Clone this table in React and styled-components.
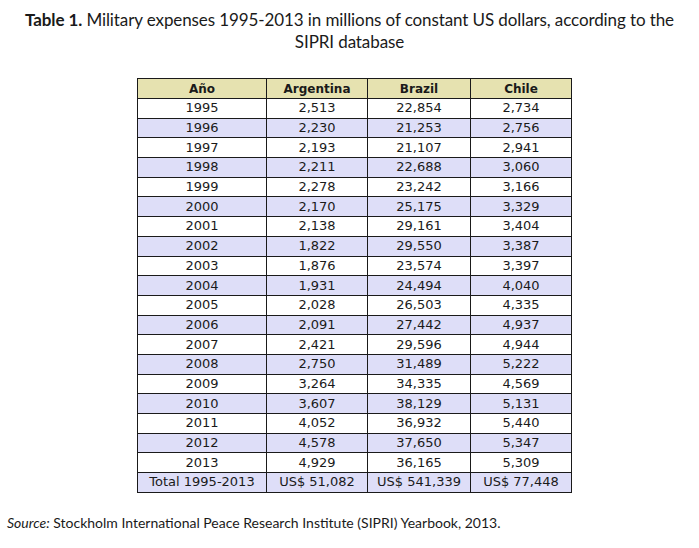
import React from "react";
import styled, { createGlobalStyle } from "styled-components";

const rows = [
  ["1995", "2,513", "22,854", "2,734"],
  ["1996", "2,230", "21,253", "2,756"],
  ["1997", "2,193", "21,107", "2,941"],
  ["1998", "2,211", "22,688", "3,060"],
  ["1999", "2,278", "23,242", "3,166"],
  ["2000", "2,170", "25,175", "3,329"],
  ["2001", "2,138", "29,161", "3,404"],
  ["2002", "1,822", "29,550", "3,387"],
  ["2003", "1,876", "23,574", "3,397"],
  ["2004", "1,931", "24,494", "4,040"],
  ["2005", "2,028", "26,503", "4,335"],
  ["2006", "2,091", "27,442", "4,937"],
  ["2007", "2,421", "29,596", "4,944"],
  ["2008", "2,750", "31,489", "5,222"],
  ["2009", "3,264", "34,335", "4,569"],
  ["2010", "3,607", "38,129", "5,131"],
  ["2011", "4,052", "36,932", "5,440"],
  ["2012", "4,578", "37,650", "5,347"],
  ["2013", "4,929", "36,165", "5,309"],
];

const GlobalStyle = createGlobalStyle`
  body {
    margin: 0;
    background: #ffffff;
    font-family: "Lato", "Open Sans", sans-serif;
    color: #1a1a1a;
  }
`;

const Page = styled.main`
  width: 699px;
  height: 548px;
  padding-top: 9px;
  box-sizing: border-box;
`;

const Caption = styled.h1`
  margin: 0 auto;
  width: 652px;
  text-align: center;
  font-size: 17px;
  letter-spacing: -0.1px;
  font-weight: 400;
  line-height: 22px;
  color: #1a1a1a;

  b {
    font-weight: 700;
  }
`;

const Table = styled.table`
  margin: 25px 0 0 137px;
  border-collapse: collapse;
  font-family: "DejaVu Sans", sans-serif;
  font-size: 13px;
  color: #1a1a1a;
`;

const Head = styled.th`
  background: #e6e2b0;
  border: 1px solid #1a1a1a;
  height: 19px;
  padding: 0;
  font-weight: 700;
  font-size: 12px;
  width: ${(p) => p.$w}px;
`;

const Row = styled.tr`
  background: ${(p) => (p.$shaded ? "#dedef8" : "#ffffff")};
`;

const Cell = styled.td`
  border: 1px solid #1a1a1a;
  height: 18.7px;
  padding: 0;
  text-align: center;
  line-height: 16px;
`;

const Source = styled.p`
  margin: 21px 0 0 7px;
  font-size: 14px;
  color: #1a1a1a;

  i {
    font-style: italic;
  }
`;

const widths = [128, 100, 102, 100];

export default function App() {
  return (
    <Page>
      <GlobalStyle />
      <Caption>
        <b>Table 1.</b> Military expenses 1995-2013 in millions of constant US
        dollars, according to the SIPRI database
      </Caption>
      <Table>
        <thead>
          <tr>
            {["Año", "Argentina", "Brazil", "Chile"].map((h, i) => (
              <Head key={h} $w={widths[i]}>
                {h}
              </Head>
            ))}
          </tr>
        </thead>
        <tbody>
          {rows.map((r, i) => (
            <Row key={r[0]} $shaded={i % 2 === 1}>
              {r.map((c, j) => (
                <Cell key={j}>{c}</Cell>
              ))}
            </Row>
          ))}
          <Row $shaded>
            <Cell>Total 1995-2013</Cell>
            <Cell>US$ 51,082</Cell>
            <Cell>US$ 541,339</Cell>
            <Cell>US$ 77,448</Cell>
          </Row>
        </tbody>
      </Table>
      <Source>
        <i>Source:</i> Stockholm International Peace Research Institute (SIPRI)
        Yearbook, 2013.
      </Source>
    </Page>
  );
}
